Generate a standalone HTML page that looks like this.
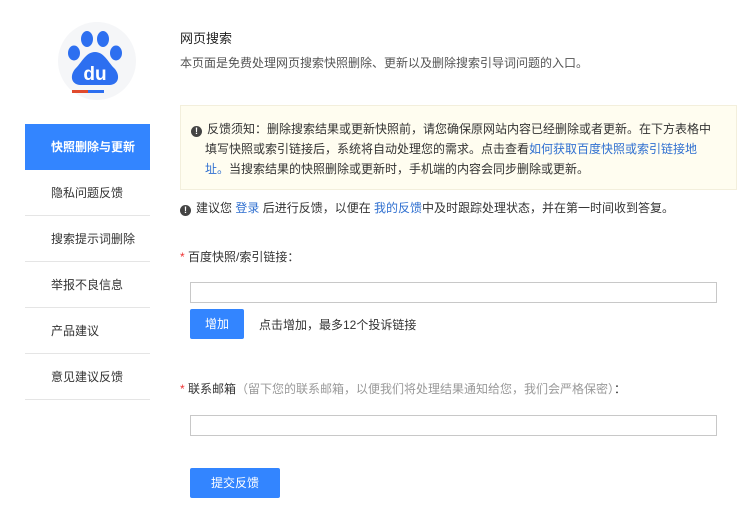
<!DOCTYPE html><html><head><meta charset="utf-8"><style>
body{margin:0;width:756px;height:512px;background:#fff;font-family:"Liberation Sans","Noto Sans CJK SC",sans-serif;font-size:12px;color:#333;position:relative;overflow:hidden}
.a{position:absolute;white-space:nowrap}
.nav{position:absolute;left:25px;width:125px;height:45px;border-bottom:1px solid #e5e5e5;line-height:45px;padding-left:26px;box-sizing:border-box;font-size:12px;color:#333}
.act{background:#3385ff;color:#fff;font-weight:bold;border:none}
.in{position:absolute;left:190px;width:527px;height:21px;border:1px solid #c8c8c8;box-sizing:border-box}
.btn{position:absolute;background:#3385ff;color:#fff;text-align:center;border-radius:2px;font-size:12px}
a{color:#3070d0;text-decoration:none}
.ic{display:inline-block;width:11px;height:11px;border-radius:50%;background:#444;color:#fff;font-size:9px;line-height:11px;text-align:center;font-weight:bold;vertical-align:-1px;margin-right:5px}
.r{color:#e33}
</style></head><body>
<div class="a" style="left:58px;top:22px;width:78px;height:78px;border-radius:50%;background:#f5f6f8"></div>
<svg class="a" style="left:58px;top:22px" width="78" height="78" viewBox="0 0 78 78">
<ellipse cx="29" cy="17" rx="6" ry="8" fill="#2d6ff0"/><ellipse cx="45" cy="17" rx="6" ry="8" fill="#2d6ff0"/>
<ellipse cx="16" cy="31" rx="6" ry="7.5" fill="#2d6ff0"/><ellipse cx="58" cy="31" rx="6" ry="7.5" fill="#2d6ff0"/>
<path d="M37 30 C28 30 24 40 18 46 C12 52 12 62 22 63 L52 63 C62 62 62 52 56 46 C50 40 46 30 37 30Z" fill="#2d6ff0"/>
<text x="37" y="58" text-anchor="middle" font-family="Liberation Sans" font-weight="bold" font-size="19" fill="#fff">du</text>
<rect x="14" y="68" width="16" height="3" fill="#e04a2d"/><rect x="30" y="68" width="16" height="3" fill="#2d6ff0"/>
</svg>
<div class="nav act" style="top:124px;height:46px;line-height:46px">快照删除与更新</div>
<div class="nav" style="top:170px;height:46px;line-height:46px">隐私问题反馈</div>
<div class="nav" style="top:216px;height:46px;line-height:46px">搜索提示词删除</div>
<div class="nav" style="top:262px;height:46px;line-height:46px">举报不良信息</div>
<div class="nav" style="top:308px;height:46px;line-height:46px">产品建议</div>
<div class="nav" style="top:354px;height:46px;line-height:46px">意见建议反馈</div>
<div class="a" style="left:180px;top:28px;font-size:13px;color:#222">网页搜索</div>
<div class="a" style="left:180px;top:54px;color:#555">本页面是免费处理网页搜索快照删除、更新以及删除搜索引导词问题的入口。</div>
<div class="a" style="left:180px;top:105px;width:557px;height:85px;background:#fffdf0;border:1px solid #f3efdc;box-sizing:border-box"></div>
<div class="a" style="left:191px;top:119px;line-height:20px;color:#333;white-space:normal;width:530px"><span class="ic">!</span>反馈须知：删除搜索结果或更新快照前，请您确保原网站内容已经删除或者更新。在下方表格中<br><span style="padding-left:14px">填写快照或索引链接后，系统将自动处理您的需求。点击查看<a>如何获取百度快照或索引链接地</a></span><br><span style="padding-left:14px"><a>址。</a>当搜索结果的快照删除或更新时，手机端的内容会同步删除或更新。</span></div>
<div class="a" style="left:180px;top:199px"><span class="ic">!</span>建议您 <a>登录</a> 后进行反馈，以便在 <a>我的反馈</a>中及时跟踪处理状态，并在第一时间收到答复。</div>
<div class="a" style="left:180px;top:248px"><span class="r">*</span> 百度快照/索引链接：</div>
<div class="in" style="top:282px"></div>
<div class="btn" style="left:190px;top:309px;width:54px;height:30px;line-height:30px">增加</div>
<div class="a" style="left:259px;top:316px">点击增加，最多12个投诉链接</div>
<div class="a" style="left:180px;top:380px"><span class="r">*</span> 联系邮箱<span style="color:#999">（留下您的联系邮箱，以便我们将处理结果通知给您，我们会严格保密）</span>：</div>
<div class="in" style="top:415px"></div>
<div class="btn" style="left:190px;top:468px;width:90px;height:30px;line-height:30px">提交反馈</div>
</body></html>
